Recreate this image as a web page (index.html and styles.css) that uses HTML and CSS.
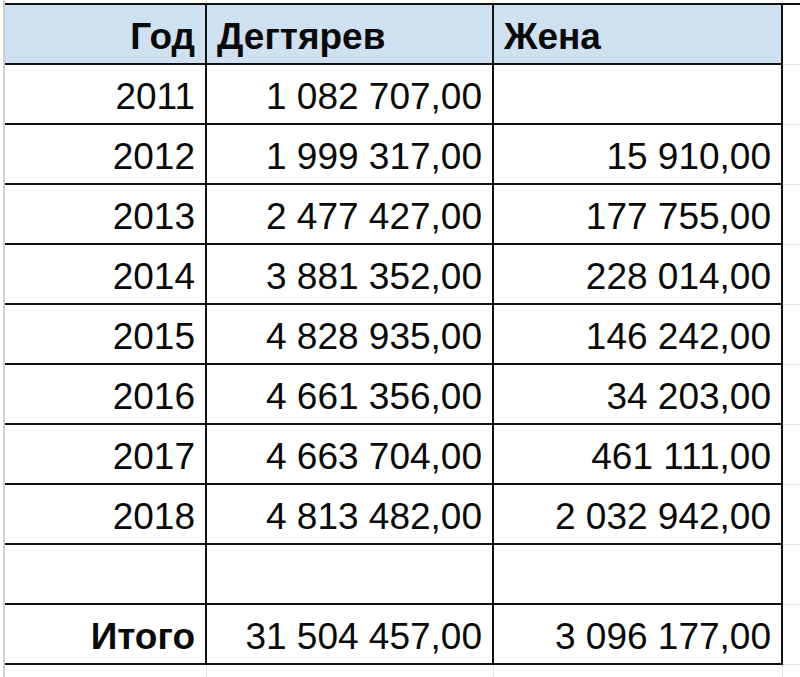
FILE: index.html
```html
<!DOCTYPE html>
<html lang="ru">
<head>
<meta charset="utf-8">
<title>Доходы</title>
<link rel="stylesheet" href="styles.css">
</head>
<body>
<div class="sheet">
  <table class="grid">
    <colgroup>
      <col class="c-year">
      <col class="c-main">
      <col class="c-wife">
      <col class="c-rest">
    </colgroup>
    <tbody>
      <tr class="pad-top"><td></td><td></td><td></td><td class="rest"></td></tr>
      <tr class="head">
        <td class="num b">Год</td>
        <td class="txt b">Дегтярев</td>
        <td class="txt b">Жена</td>
        <td class="rest"></td>
      </tr>
      <tr><td class="num">2011</td><td class="num">1 082 707,00</td><td class="num"></td><td class="rest"></td></tr>
      <tr><td class="num">2012</td><td class="num">1 999 317,00</td><td class="num">15 910,00</td><td class="rest"></td></tr>
      <tr><td class="num">2013</td><td class="num">2 477 427,00</td><td class="num">177 755,00</td><td class="rest"></td></tr>
      <tr><td class="num">2014</td><td class="num">3 881 352,00</td><td class="num">228 014,00</td><td class="rest"></td></tr>
      <tr><td class="num">2015</td><td class="num">4 828 935,00</td><td class="num">146 242,00</td><td class="rest"></td></tr>
      <tr><td class="num">2016</td><td class="num">4 661 356,00</td><td class="num">34 203,00</td><td class="rest"></td></tr>
      <tr><td class="num">2017</td><td class="num">4 663 704,00</td><td class="num">461 111,00</td><td class="rest"></td></tr>
      <tr><td class="num">2018</td><td class="num">4 813 482,00</td><td class="num">2 032 942,00</td><td class="rest"></td></tr>
      <tr><td class="num"></td><td class="num"></td><td class="num"></td><td class="rest"></td></tr>
      <tr><td class="num b">Итого</td><td class="num">31 504 457,00</td><td class="num">3 096 177,00</td><td class="rest"></td></tr>
      <tr class="pad-bottom"><td></td><td></td><td></td><td class="rest"></td></tr>
    </tbody>
  </table>
</div>
</body>
</html>
```

FILE: styles.css
```css
html, body {
  margin: 0;
  padding: 0;
  background: #ffffff;
  overflow: hidden;
}

.sheet {
  margin-left: 3px;
  border-left: 2px solid #cfcfcf;
  height: 677px;
  font-family: "Liberation Sans", Arial, sans-serif;
  color: #0a0a0a;
}

.grid {
  border-collapse: collapse;
  table-layout: fixed;
  width: 820px;
}

.c-year { width: 201px; }
.c-main { width: 287px; }
.c-wife { width: 289px; }
.c-rest { width: 43px; }

.grid td {
  height: 50px;
  padding: 0 10px 8px 10px;
  font-size: 37px;
  line-height: 37px;
  vertical-align: bottom;
  white-space: nowrap;
  border: 2px solid #111111;
  border-left: none;
}

.grid td.num { text-align: right; }
.grid td.txt { text-align: left; }
.grid td.b { font-weight: bold; }

.grid tr.head td { background: #cfe0f1; }
.grid tr.head td.rest { background: transparent; }

.grid td.rest {
  border: none;
  border-bottom: 1px solid #e3e3e3;
  border-top: 1px solid #e3e3e3;
}

.grid tr.pad-top td {
  height: 3px;
  padding: 0;
  border-top: none;
  border-bottom: 2px solid #111111;
  border-right: 1px solid #e3e3e3;
}

.grid tr.pad-bottom td {
  height: 12px;
  padding: 0;
  border-bottom: none;
  border-right: 1px solid #e3e3e3;
}

.grid tr.pad-top td.rest,
.grid tr.pad-bottom td.rest {
  border-right: none;
}
```
